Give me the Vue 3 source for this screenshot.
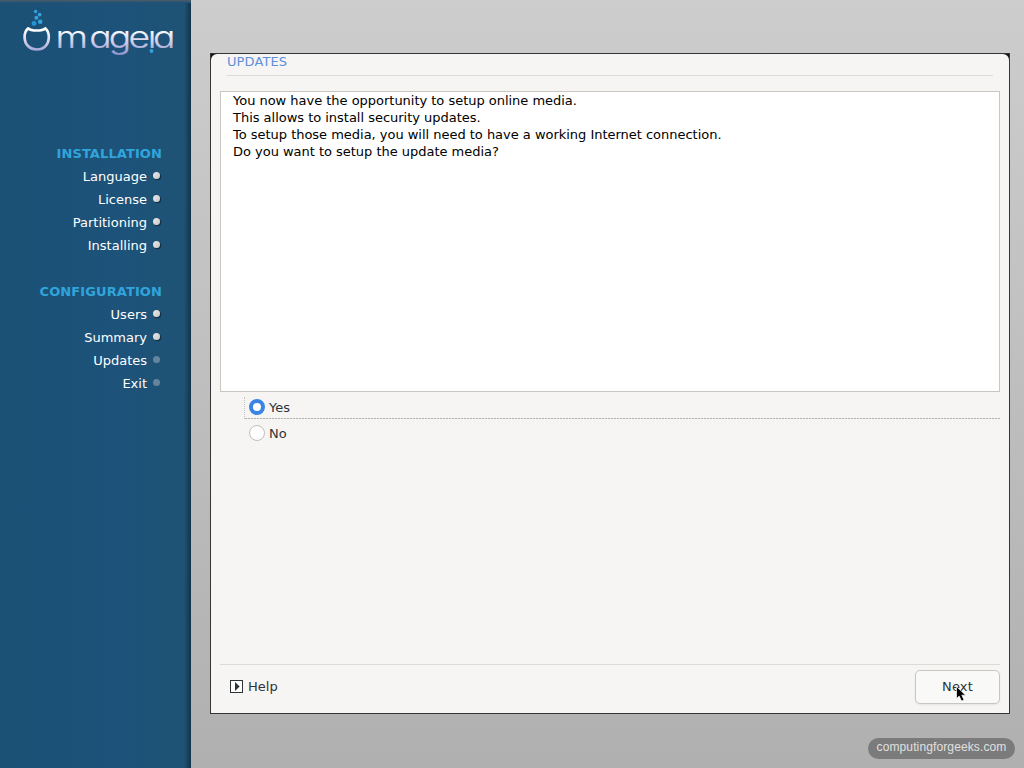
<template>
  <div class="screen">
    <aside class="sidebar">
      <svg class="logo" width="191" height="60" viewBox="0 0 191 60">
        <defs>
          <linearGradient id="silver" gradientUnits="userSpaceOnUse" x1="0" y1="27" x2="0" y2="55">
            <stop offset="0.1" stop-color="#ffffff" />
            <stop offset="0.5" stop-color="#d5d3ea" />
            <stop offset="1" stop-color="#8f92cf" />
          </linearGradient>
        </defs>
        <path
          d="M28.3 28.3 C25.8 30.3 24.6 33.5 24.6 37 C24.6 44.5 29.6 49.5 36.8 49.5 C44 49.5 48.8 44.5 48.8 37 C48.8 33.5 47.6 30.3 45.2 28.3 C42.5 31.2 31 31.2 28.3 28.3 Z"
          fill="none" stroke="url(#silver)" stroke-width="2.7" stroke-linejoin="round" />
        <g fill="#35a3df">
          <circle cx="35.6" cy="11.5" r="1.7" />
          <circle cx="39.6" cy="14.6" r="1.9" />
          <circle cx="36.4" cy="17.8" r="2" />
          <circle cx="40.2" cy="21.8" r="2.3" />
          <circle cx="34" cy="23.4" r="2.4" fill="#2596d8" />
          <circle cx="151.5" cy="51" r="1.9" />
        </g>
        <text class="wordmark" transform="scale(1.2 1)" x="46.2 74.4 90.6 107 123.2 127.6" y="47.8"
          fill="url(#silver)" stroke="url(#silver)" stroke-width="0.2">mageıa</text>
      </svg>
      <div v-for="group in groups" :key="group.title" class="group">
        <h2>{{ group.title }}</h2>
        <ul>
          <li v-for="step in group.steps" :key="step.name">
            {{ step.name }}<span :class="step.done ? 'dot done' : 'dot'"></span>
          </li>
        </ul>
      </div>
    </aside>

    <main class="desktop">
      <section class="dialog-frame">
        <div class="dialog">
          <h1>UPDATES</h1>
          <div class="message">
            <p v-for="line in message" :key="line">{{ line }}</p>
          </div>
          <div class="options">
            <label v-for="option in options" :key="option" :class="{ focused: option === selected }"
              @click="selected = option">
              <span class="radio" :class="{ on: option === selected }"></span>{{ option }}
            </label>
          </div>
          <footer>
            <div class="help">
              <svg width="13" height="13" viewBox="0 0 13 13">
                <rect x="0.5" y="0.5" width="12" height="12" fill="#fff" stroke="#2e3436" />
                <path d="M5 2 L9.7 6.5 L5 11 Z" fill="#2e3436" />
              </svg>
              Help
            </div>
            <button>Next</button>
          </footer>
        </div>
      </section>
    </main>

    <div class="credit">computingforgeeks.com</div>
    <svg class="cursor" width="12" height="17" viewBox="0 0 12 17">
      <path d="M0.5 0.5 V12.6 L3.2 10.1 L5.5 15 L8 13.9 L5.8 9.2 H9.6 Z" fill="#000" stroke="#fff"
        stroke-width="0.7" />
    </svg>
  </div>
</template>

<script setup>
import { ref } from 'vue';

const groups = [
  {
    title: 'INSTALLATION',
    steps: [
      { name: 'Language', done: true },
      { name: 'License', done: true },
      { name: 'Partitioning', done: true },
      { name: 'Installing', done: true },
    ]
  },
  {
    title: 'CONFIGURATION',
    steps: [
      { name: 'Users', done: true },
      { name: 'Summary', done: true },
      { name: 'Updates', done: false },
      { name: 'Exit', done: false },
    ]
  },
];

const message = [
  'You now have the opportunity to setup online media.',
  'This allows to install security updates.',
  'To setup those media, you will need to have a working Internet connection.',
  'Do you want to setup the update media?',
];

const options = ['Yes', 'No'];
const selected = ref('Yes');
</script>

<style>
body {
  margin: 0;
  overflow: hidden;
}
</style>

<style scoped>
.screen {
  position: relative;
  display: flex;
  width: 1024px;
  height: 768px;
  box-sizing: border-box;
  font-family: "DejaVu Sans", sans-serif;
  font-size: 13px;
  background: linear-gradient(#cdcdcd, #b0b0b0);
}

.sidebar {
  width: 191px;
  box-sizing: border-box;
  color: #fff;
  background:
    linear-gradient(#4c5c69, #1e5176) top / 100% 3px no-repeat,
    linear-gradient(to right, transparent 184px, rgba(10, 30, 45, 0.6) 191px),
    linear-gradient(to right, #1b5175, #1d527a 65%, #1f5374);
}

.logo {
  display: block;
  margin-bottom: 82px;
}

.wordmark {
  font-family: Inter, sans-serif;
  font-weight: 300;
  font-size: 31px;
  font-feature-settings: "cv11";
}

.group {
  margin-bottom: 23px;
  text-align: right;
}

.group h2 {
  margin: 0;
  padding-right: 29px;
  font-size: 13px;
  line-height: 23px;
  letter-spacing: 0.1px;
  color: #30a5dc;
}

.group ul {
  list-style: none;
  margin: 0;
  padding: 0 30px 0 0;
}

.group li {
  display: flex;
  justify-content: flex-end;
  align-items: center;
  gap: 6px;
  height: 23px;
}

.dot {
  width: 7px;
  height: 7px;
  margin-right: 1px;
  margin-bottom: 2px;
  border-radius: 50%;
  background: #64859d;
}

.dot.done {
  background: linear-gradient(135deg, #e9e9e9, #c9c9c9);
  box-shadow: 1px 1px 1px rgba(0, 0, 0, 0.5);
}

.desktop {
  flex: 1;
  padding: 53px 14px 54px 19px;
}

.dialog-frame {
  height: 661px;
  box-sizing: border-box;
  border: 1px solid #353535;
  background: #111;
}

.dialog {
  display: flex;
  flex-direction: column;
  height: 100%;
  box-sizing: border-box;
  padding: 0 9px;
  border-radius: 6px 6px 0 0;
  background: #f6f5f4;
  color: #2e3436;
}

h1 {
  margin: 0 7px 15px 7px;
  height: 21px;
  border-bottom: 1px solid #dcdbd8;
  font-size: 13px;
  font-weight: normal;
  line-height: 16px;
  letter-spacing: 0.1px;
  color: #5f8fd9;
}

.message {
  height: 301px;
  box-sizing: border-box;
  border: 1px solid #cac7c3;
  background: #fff;
  padding-left: 12px;
  color: #000;
}

.message p {
  margin: 0;
  line-height: 17px;
  letter-spacing: -0.02px;
}

.options {
  flex: 1;
  padding: 5px 0 0 24px;
}

.options label {
  display: flex;
  align-items: center;
  gap: 4px;
  box-sizing: border-box;
  height: 22px;
  margin-bottom: 4px;
  padding: 0 0 2px 4px;
  border-left: 1px dotted transparent;
}

.options label.focused {
  border-left-color: #c4c3c1;
  background: repeating-linear-gradient(to right, #b5b4b2 0 2px, #e4e3e1 2px 3px) bottom / 100% 1px no-repeat;
}

.radio {
  width: 16px;
  height: 16px;
  box-sizing: border-box;
  border: 1px solid #c2beb9;
  border-radius: 50%;
  background: #fff;
}

.radio.on {
  border: 4px solid #3a84e4;
}

footer {
  display: flex;
  justify-content: space-between;
  align-items: flex-start;
  height: 49px;
  box-sizing: border-box;
  border-top: 1px solid #dcdbd8;
  padding-top: 5px;
}

.help {
  display: flex;
  align-items: center;
  gap: 5px;
  height: 32px;
  padding-left: 10px;
}

button {
  width: 85px;
  height: 34px;
  padding: 0 6px 2px;
  border: 1px solid #c9c5c0;
  border-radius: 5px;
  background: #f9f9f8;
  box-shadow: 0 1px 2px rgba(0, 0, 0, 0.07);
  font: inherit;
  letter-spacing: 0.15px;
  color: #2e3436;
}

.credit {
  position: absolute;
  left: 868px;
  top: 738px;
  width: 147px;
  height: 21px;
  border-radius: 11px;
  background: #7b7b7b;
  color: #e0e0e0;
  font: 12px/19px "Liberation Sans", sans-serif;
  letter-spacing: 0.12px;
  text-align: center;
}

.cursor {
  position: absolute;
  left: 956px;
  top: 686px;
}
</style>
